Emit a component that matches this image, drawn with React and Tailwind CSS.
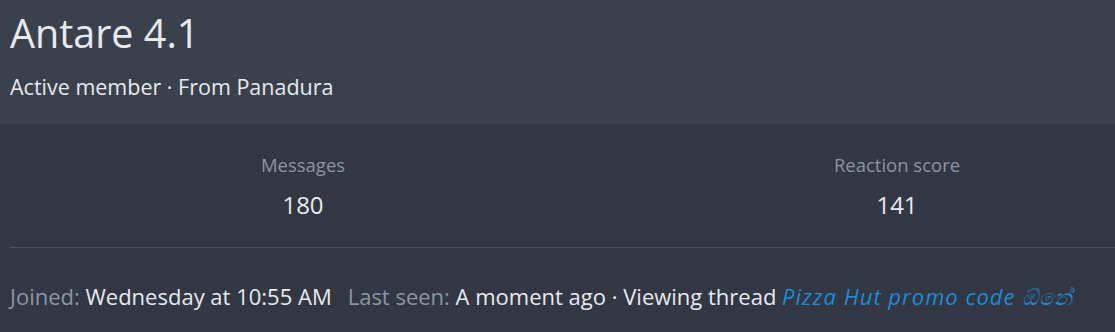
import React from 'react';

const stats = [
  { label: 'Messages', value: '180' },
  { label: 'Reaction score', value: '141' },
];

const StatPair = ({ label, value }) => (
  <dl className="flex w-[240px] flex-col items-center">
    <dt className="text-[18.5px] leading-[24px] text-[#8c95a4]">{label}</dt>
    <dd className="mt-[14px] text-[24px] leading-[28px] text-[#e8ebf0]">{value}</dd>
  </dl>
);

export default function App() {
  return (
    <div
      className="h-[332px] w-[1115px] overflow-hidden bg-[#323743]"
      style={{ fontFamily: '"Open Sans", "Noto Sans", sans-serif' }}
    >
      {/* header */}
      <div className="h-[124px] bg-[#3b414c] px-[10px] pt-[9px]">
        <h1 className="text-[39.5px] leading-[48px] text-[#e6e9ee]">Antare 4.1</h1>
        <div className="mt-[17px] text-[21.5px] leading-[26px] text-[#e6e9ee]">
          Active member · From Panadura
        </div>
      </div>

      {/* stats */}
      <div className="pl-[10px]">
        <div className="flex gap-[354px] pl-[173px] pt-[29px] pb-[28px]">
          {stats.map((s) => (
            <StatPair key={s.label} {...s} />
          ))}
        </div>
        <div className="border-t border-[#4a505c]" />

        {/* footer */}
        <div className="pt-[35px] text-[22px] leading-[26px] text-[#e6e9ee]">
          <span className="text-[#8c95a4]">Joined:</span> Wednesday at 10:55 AM
          <span className="ml-[16px] text-[#8c95a4]">Last seen:</span> A moment ago · Viewing thread{' '}
          <a href="#" className="italic tracking-[1px] text-[#1e8ad6]">
            Pizza Hut promo code ඕනේ
          </a>
        </div>
      </div>
    </div>
  );
}
